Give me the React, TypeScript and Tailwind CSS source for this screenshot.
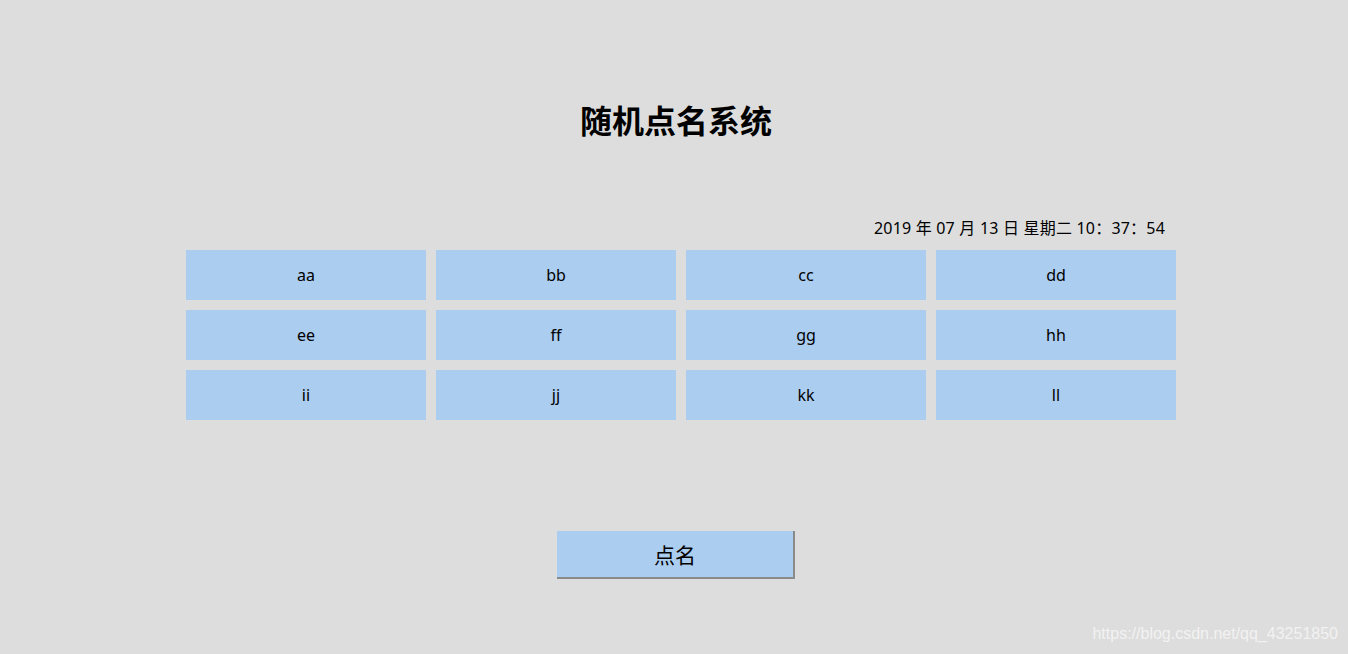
import React from "react";

const names = ["aa", "bb", "cc", "dd", "ee", "ff", "gg", "hh", "ii", "jj", "kk", "ll"];

export default function App() {
  return (
    <div
      className="relative w-full h-[654px] bg-[#dddddd] text-black overflow-hidden"
      style={{ fontFamily: '"Noto Sans", "Noto Sans CJK SC", sans-serif' }}
    >
      <h1 className="pt-[100px] pl-[4px] text-center text-[32px] leading-[42px] font-bold">随机点名系统</h1>
      <div className="mx-auto w-[1004px] pl-[14px] mt-[76px]">
        <div className="flex justify-end pr-[11px] text-[16px] leading-[20px] tracking-[0.2px]">
          2019 年 07 月 13 日 星期二 10：37：54
        </div>
        <div className="mt-[12px] grid grid-cols-4 gap-[10px] w-[990px]">
          {names.map((n) => (
            <div key={n} className="h-[50px] bg-[#abcdf0] flex items-center justify-center text-[16px]">
              {n}
            </div>
          ))}
        </div>
      </div>
      <div className="flex justify-center pl-[4px] mt-[111px]">
        <button className="w-[238px] h-[48px] bg-[#abcdf0] border-r-2 border-b-2 border-[#8a8a8a] text-[21px] leading-none pt-[2px]">
          点名
        </button>
      </div>
      <div
        className="absolute right-[10px] bottom-[8px] text-[16px] text-[#f2f2f2]"
        style={{ fontFamily: '"Liberation Sans", Arial, sans-serif' }}
      >
        https://blog.csdn.net/qq_43251850
      </div>
    </div>
  );
}
